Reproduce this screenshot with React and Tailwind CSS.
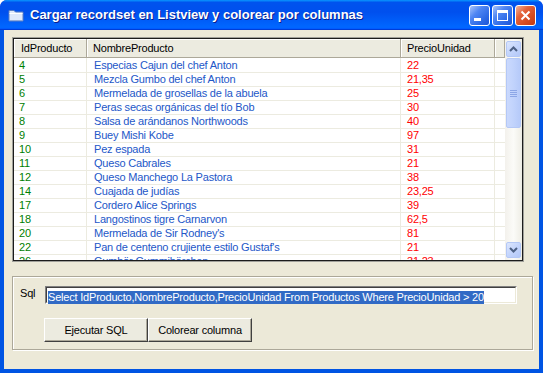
import React from 'react';

// rows of the listview, as shown in the reference
const rows = [
  ['4', 'Especias Cajun del chef Anton', '22'],
  ['5', 'Mezcla Gumbo del chef Anton', '21,35'],
  ['6', 'Mermelada de grosellas de la abuela', '25'],
  ['7', 'Peras secas orgánicas del tío Bob', '30'],
  ['8', 'Salsa de arándanos Northwoods', '40'],
  ['9', 'Buey Mishi Kobe', '97'],
  ['10', 'Pez espada', '31'],
  ['11', 'Queso Cabrales', '21'],
  ['12', 'Queso Manchego La Pastora', '38'],
  ['14', 'Cuajada de judías', '23,25'],
  ['17', 'Cordero Alice Springs', '39'],
  ['18', 'Langostinos tigre Carnarvon', '62,5'],
  ['20', "Mermelada de Sir Rodney's", '81'],
  ['22', "Pan de centeno crujiente estilo Gustaf's", '21'],
  ['26', 'Gumbär Gummibärchen', '31,23'],
];

const font = "font-['Liberation_Sans',Arial,sans-serif]";

function FolderIcon() {
  return (
    <svg width="16" height="14" viewBox="0 0 16 14">
      <path d="M1 2.5h5l1.5 1.5H15v9H1z" fill="#dfe9fb" stroke="#5a7fc4" strokeWidth="1" />
      <path d="M1.5 5.5h13" stroke="#ffffff" strokeWidth="1" />
      <path d="M1.5 12.5h13" stroke="#8fa9d8" strokeWidth="1" />
    </svg>
  );
}

function CaptionButton({ kind }) {
  const base =
    kind === 'close'
      ? 'bg-[linear-gradient(135deg,#f3b49c,#e4623a_35%,#d44a20_70%,#c23b14)]'
      : 'bg-[linear-gradient(135deg,#a9c4fa,#4f86f3_35%,#2e6ae6_70%,#1e55d6)]';
  return (
    <div className={`w-[21px] h-[21px] rounded-[3px] border border-white flex items-center justify-center ${base}`}>
      {kind === 'min' && <div className="w-[7px] h-[3px] bg-white mt-[9px] mr-[5px]" />}
      {kind === 'max' && <div className="w-[11px] h-[11px] border border-white border-t-[3px]" />}
      {kind === 'close' && (
        <svg width="11" height="11" viewBox="0 0 11 11">
          <path d="M1.5 1.5l8 8M9.5 1.5l-8 8" stroke="#fff" strokeWidth="2" />
        </svg>
      )}
    </div>
  );
}

function ScrollArrow({ up }) {
  return (
    <div className="w-[15px] h-[16px] mx-auto rounded-[2px] border border-[#b4c8f6] bg-[linear-gradient(135deg,#dce6fd,#c4d5fc_50%,#b3c8f8)] flex items-center justify-center">
      <svg width="9" height="6" viewBox="0 0 9 6">
        <path d={up ? 'M1 5l3.5-3.5L8 5' : 'M1 1l3.5 3.5L8 1'} fill="none" stroke="#4d6185" strokeWidth="2" />
      </svg>
    </div>
  );
}

function ListView() {
  return (
    <div className="w-[512px] h-[225px] border border-[#a0a09a] bg-white">
      <div className="w-full h-full border border-[#1c1c1c] flex overflow-hidden">
        <div className="w-[491px] flex flex-col overflow-hidden">
          <div className="grid grid-cols-[73px_314px_94px_10px] h-[19px] bg-[#ecebe0] text-black">
            {['IdProducto', 'NombreProducto', 'PrecioUnidad', ''].map((h, i) => (
              <div
                key={i}
                className={`border-r border-b border-[#aca899] shadow-[inset_1px_1px_0_#ffffff] leading-[18px] ${
                  i === 0 ? 'pl-[7px]' : 'pl-[6px]'
                }`}
              >
                {h}
              </div>
            ))}
          </div>
          {rows.map(([id, name, price]) => (
            <div key={id} className="grid grid-cols-[73px_314px_94px_10px] h-[14px] shrink-0 leading-[14px]">
              <div className="pl-[5px] border-r border-b border-[#ecebe0] text-[#008000]">{id}</div>
              <div className="pl-[7px] border-r border-b border-[#ecebe0] text-[#2357c8] whitespace-nowrap">{name}</div>
              <div className="pl-[6px] border-r border-b border-[#ecebe0] text-[#ff0000]">{price}</div>
              <div className="border-b border-[#ecebe0]" />
            </div>
          ))}
        </div>
        <div className="w-[17px] h-full bg-[linear-gradient(90deg,#f3f1ec,#fbfbf8_50%,#eeede5)] flex flex-col py-[2px]">
          <ScrollArrow up />
          <div className="w-[15px] h-[70px] mx-auto mt-[1px] rounded-[2px] border border-[#b4c8f6] bg-[linear-gradient(90deg,#cad9fd,#c1d3fc_50%,#b6caf9)] flex flex-col items-center justify-center gap-[1px]">
            {[0, 1, 2, 3].map((k) => (
              <div key={k} className="w-[7px] h-[1px] bg-[#8ca6e6]" />
            ))}
          </div>
          <div className="flex-1" />
          <ScrollArrow />
        </div>
      </div>
    </div>
  );
}

function Button({ children, width }) {
  return (
    <div
      className={`${width} h-[24px] bg-[#ecebe0] border border-t-white border-l-white border-r-[#404040] border-b-[#404040] shadow-[inset_-1px_-1px_0_#aca899] flex items-center justify-center text-black`}
    >
      {children}
    </div>
  );
}

export default function App() {
  return (
    <div className={`w-[543px] h-[373px] bg-white ${font} text-[11px] tracking-[-0.2px] select-none`}>
      <div className="w-full h-full flex flex-col rounded-t-[7px] overflow-hidden bg-[#0831d9]">
        <div className="h-[30px] shrink-0 flex items-center pl-[8px] pr-[7px] bg-[linear-gradient(180deg,#0997ff,#0053ee_8%,#0050ee_40%,#06f_88%,#06f_93%,#005bff_95%,#003dd7_96%,#003dd7)]">
          <FolderIcon />
          <div className="ml-[6px] text-white font-bold text-[13px] tracking-normal [text-shadow:1px_1px_0_#0a1f8f]">
            Cargar recordset en Listview y colorear por columnas
          </div>
          <div className="ml-auto flex gap-[2px]">
            <CaptionButton kind="min" />
            <CaptionButton kind="max" />
            <CaptionButton kind="close" />
          </div>
        </div>
        <div className="flex-1 border-x-4 border-b-4 border-[#0054e3] bg-[#ece9d8] pl-[8px] pt-[7px]">
          <ListView />
          <div className="mt-[14px] w-[521px] h-[74px] border border-[#aca899] shadow-[inset_1px_1px_0_#ffffff,1px_1px_0_#ffffff] pl-[7px] pt-[9px]">
            <div className="flex items-center">
              <div className="w-[25px] text-black leading-[18px] -mt-[4px]">Sql</div>
              <div className="w-[472px] h-[18px] border border-t-[#808080] border-l-[#808080] border-r-white border-b-white">
                <div className="w-full h-full border border-t-[#404040] border-l-[#404040] border-r-[#ece9d8] border-b-[#ece9d8] bg-white pl-[1px] pt-[1px]">
                  <span className="bg-[#316ac5] text-white leading-[13px] inline-block whitespace-nowrap">
                    Select IdProducto,NombreProducto,PrecioUnidad From Productos Where PrecioUnidad &gt; 20
                  </span>
                </div>
              </div>
            </div>
            <div className="flex mt-[14px] ml-[24px]">
              <Button width="w-[104px]">Ejecutar SQL</Button>
              <Button width="w-[104px]">Colorear columna</Button>
            </div>
          </div>
        </div>
      </div>
    </div>
  );
}
